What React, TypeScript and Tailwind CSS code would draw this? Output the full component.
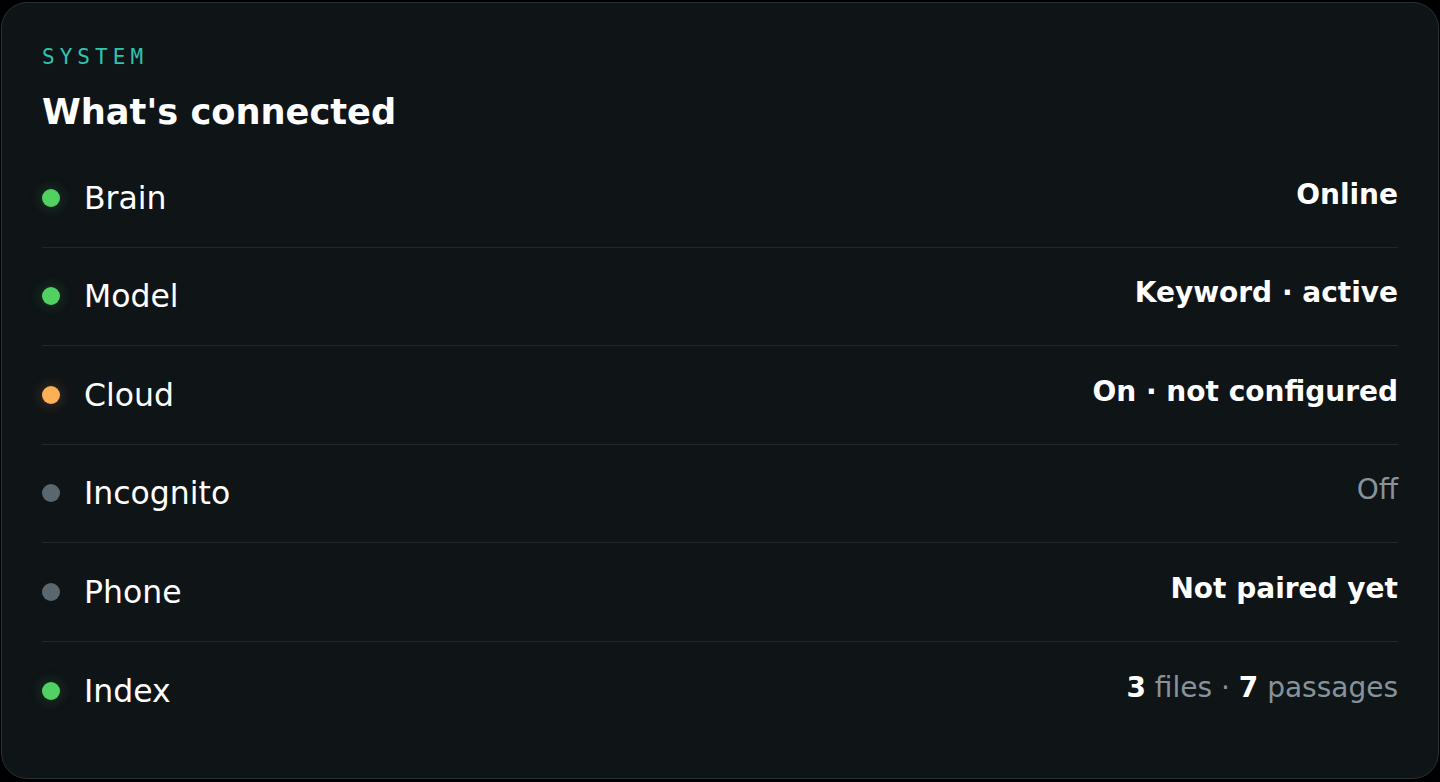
import type { ReactNode } from 'react';

type Tone = 'ok' | 'warn' | 'idle';

type Row = {
  label: string;
  tone: Tone;
  value: ReactNode;
};

const dotClass: Record<Tone, string> = {
  ok: 'bg-[#50d162] shadow-[0_0_12px_3px_rgba(80,209,98,0.14)]',
  warn: 'bg-[#fdb056] shadow-[0_0_12px_3px_rgba(253,176,86,0.14)]',
  idle: 'bg-[#5a676e]',
};

const rows: Row[] = [
  { label: 'Brain', tone: 'ok', value: <span className="font-bold text-white">Online</span> },
  { label: 'Model', tone: 'ok', value: <span className="font-bold text-white">Keyword · active</span> },
  { label: 'Cloud', tone: 'warn', value: <span className="font-bold text-white">On · not configured</span> },
  { label: 'Incognito', tone: 'idle', value: <span className="text-[#86939a]">Off</span> },
  { label: 'Phone', tone: 'idle', value: <span className="font-bold text-white">Not paired yet</span> },
  {
    label: 'Index',
    tone: 'ok',
    value: (
      <span className="text-[#86939a]">
        <b className="font-bold text-white">3</b> files · <b className="font-bold text-white">7</b> passages
      </span>
    ),
  },
];

function StatusRow({ row, last }: { row: Row; last: boolean }) {
  return (
    <li
      className={`flex h-[98.5px] items-center justify-between ${
        last ? '' : 'border-b border-[#1f292d]'
      }`}
    >
      <div className="flex items-center gap-6">
        <span className={`h-[18px] w-[18px] rounded-full ${dotClass[row.tone]}`} />
        <span className="text-[31.5px] leading-[40px] text-white">{row.label}</span>
      </div>
      <div className="pb-[6px] text-[28px] leading-[36px]">{row.value}</div>
    </li>
  );
}

export default function App() {
  return (
    <div className="min-h-screen bg-black px-px pt-[2px] pb-[2px] font-['DejaVu_Sans',sans-serif]">
      <section className="rounded-[26px] border border-[#263035] bg-[#0f1417] pt-[40px] pr-[40px] pb-[38px] pl-[40px]">
        <p className="font-['DejaVu_Sans_Mono',monospace] text-[21px] leading-[28px] tracking-[0.24em] text-[#2ec4b0]">
          SYSTEM
        </p>
        <h2 className="mt-[19px] text-[35.2px] leading-[44px] font-bold text-white">What's connected</h2>
        <ul className="mt-[15px]">
          {rows.map((row, i) => (
            <StatusRow key={row.label} row={row} last={i === rows.length - 1} />
          ))}
        </ul>
      </section>
    </div>
  );
}
